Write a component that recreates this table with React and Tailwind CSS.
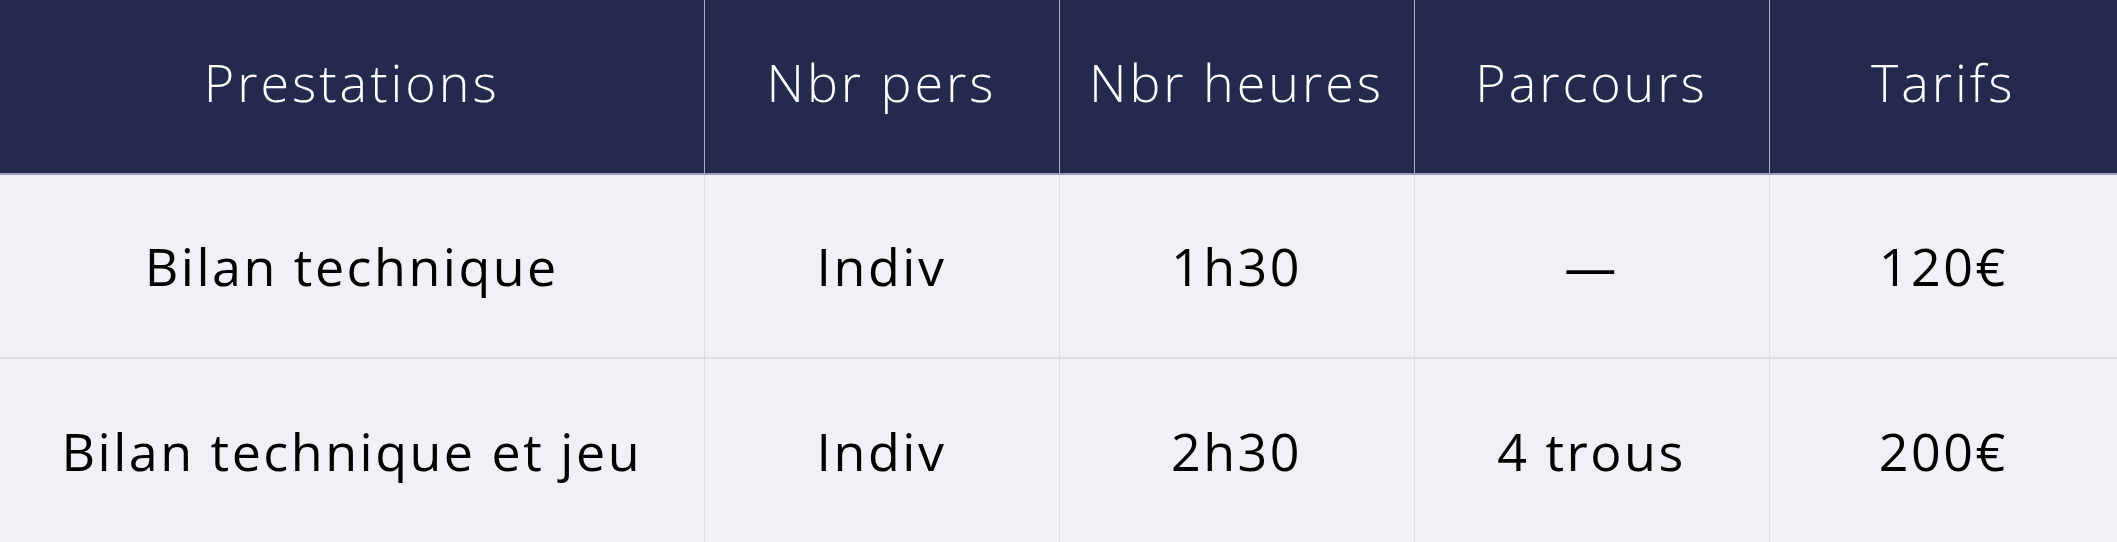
const headers = ["Prestations", "Nbr pers", "Nbr heures", "Parcours", "Tarifs"]

const rows = [
  ["Bilan technique", "Indiv", "1h30", "—", "120€"],
  ["Bilan technique et jeu", "Indiv", "2h30", "4 trous", "200€"],
]

const App = () => {
  return (
    <div className="w-[2117px] h-[542px] bg-[#f0f0f5] overflow-hidden" style={{ fontFamily: '"Open Sans", "Liberation Sans", sans-serif' }}>
      <table className="w-full table-fixed border-collapse">
        <colgroup>
          <col className="w-[704px]" />
          <col className="w-[355px]" />
          <col className="w-[355px]" />
          <col className="w-[355px]" />
          <col className="w-[348px]" />
        </colgroup>
        <thead>
          <tr className="h-[174px] bg-[#24294e]">
            {headers.map((h, i) => (
              <th
                key={h}
                className={`text-center align-middle pb-[10px] font-light text-[52px] text-white tracking-[3px] border-b-2 border-b-[#9c9fbb] ${i > 0 ? "border-l border-l-[#a9abc2]" : ""}`}
              >
                {h}
              </th>
            ))}
          </tr>
        </thead>
        <tbody>
          {rows.map((row, r) => (
            <tr key={r} className={`h-[184px] ${r === 0 ? "border-b-2 border-b-[#dedee5]" : ""}`}>
              {row.map((cell, i) => (
                <td
                  key={i}
                  className={`text-center align-middle font-normal text-[52px] text-black tracking-[2.5px] ${i > 0 ? "border-l border-l-[#dcdce3]" : ""}`}
                >
                  {cell}
                </td>
              ))}
            </tr>
          ))}
        </tbody>
      </table>
    </div>
  )
}

export default App
